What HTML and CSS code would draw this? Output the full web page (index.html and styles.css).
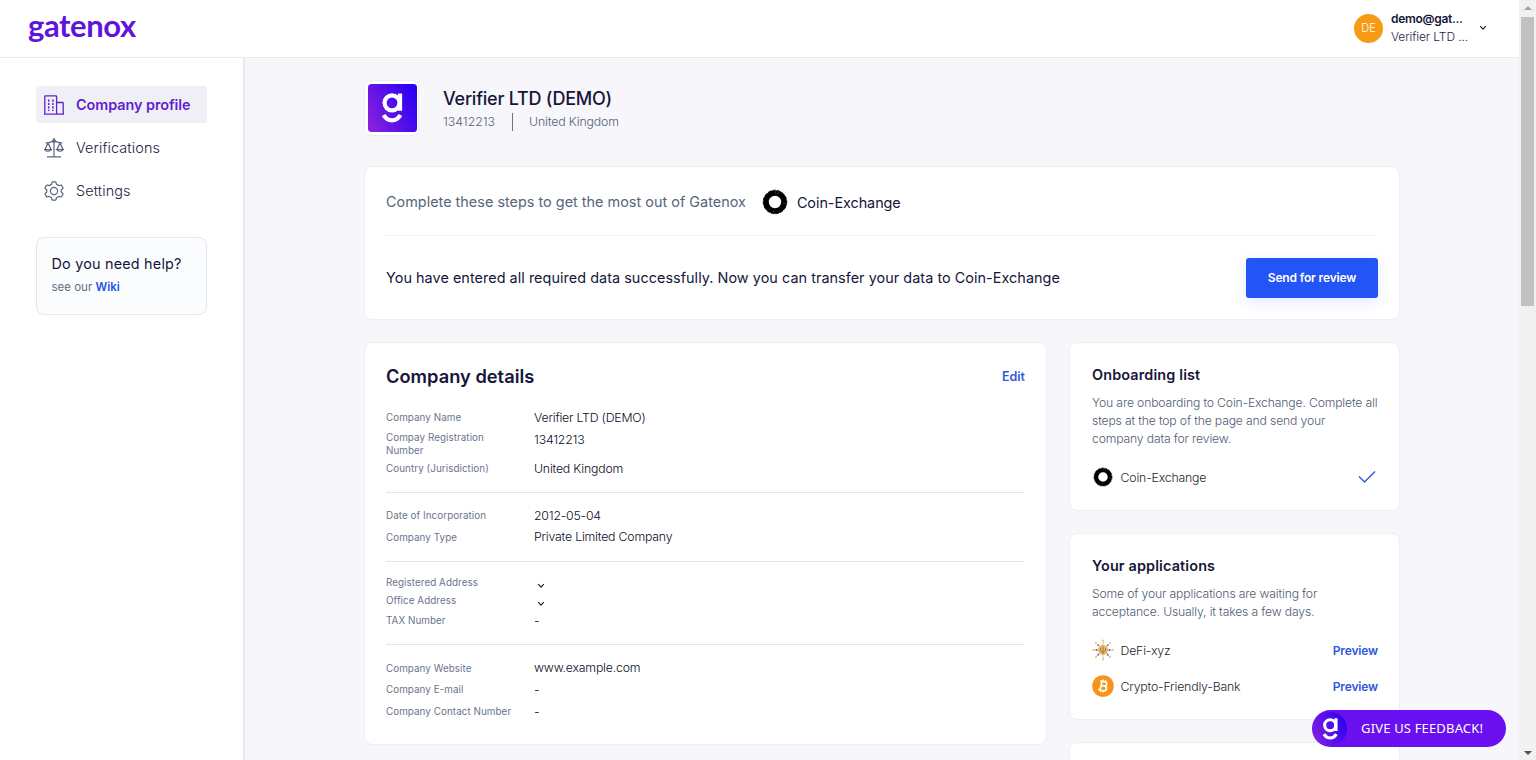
FILE: index.html
```html
<!DOCTYPE html>
<html lang="en">
<head>
<meta charset="utf-8">
<title>Gatenox</title>
<link rel="stylesheet" href="styles.css">
</head>
<body>
<svg class="defs" width="0" height="0">
  <defs>
    <linearGradient id="brand" x1="0" y1="0.75" x2="1" y2="0.25"><stop offset="0" stop-color="#8520dc"/><stop offset="1" stop-color="#2a00f5"/></linearGradient>
    <symbol id="mark" viewBox="0 0 22 32">
      <g fill="none" stroke="#fff" stroke-width="4.500"><circle cx="10.5" cy="10.5" r="8"/><path d="M19 .5V19M1.500 23.500C6 31 15 31 19.500 23.500"/></g>
    </symbol>
    <symbol id="coin" viewBox="0 0 26 26">
      <circle cx="13" cy="13" r="9" fill="none" stroke="#000" stroke-width="5.600"/>
      <circle cx="13" cy="13" r="11.800" fill="none" stroke="#000" stroke-width=".8" stroke-dasharray="3.500 1.300"/>
      <path d="M13 1l1 4M16 5l1-3M7 21l1.500-2M11 24l1-3M21 14l3 1" stroke="#777" stroke-width=".4"/>
    </symbol>
    <symbol id="chevron" viewBox="0 0 8 6"><path d="M1.200 1.200 4 4.200 6.800 1.200" fill="none" stroke="#1c1c3c" stroke-width="1.200"/></symbol>
  </defs>
</svg>
<div class="window">
  <div class="page">
    <header class="topbar">
      <div class="wordmark">gatenox</div>
      <div class="account">
        <div class="avatar">DE</div>
        <div class="who"><div class="mail">demo@gat...</div><div class="org">Verifier LTD ...</div></div>
        <svg class="chev" width="8" height="6"><use href="#chevron"/></svg>
      </div>
    </header>
    <div class="body">
      <nav class="sidebar">
        <a class="nav active"><svg width="20" height="20" viewBox="0 0 20 20" fill="none" stroke="currentColor" stroke-width="1.300"><path d="M.8 19V1.500Q.8.900 1.400.900H12Q12.600.900 12.600 1.500V19M12.600 7.500H18.600Q19.200 7.500 19.200 8.100V19M0 19.100H20"/><path d="M4.700 4.500V16M8.900 4.500V16" stroke-dasharray="2.200 1.200" stroke-width="1.500"/></svg><span>Company profile</span></a>
        <a class="nav"><svg width="20" height="20" viewBox="0 0 20 20" fill="none" stroke="currentColor" stroke-width="1.200"><path d="M10 0V18.800M3 18.900H17M1.500 5Q6 5 8 3.500Q10 2.200 12 3.500Q14 5 18.500 5M4 5 1 11.500H7ZM16 5 13 11.500H19ZM.7 11.500Q4 15 7.300 11.500ZM12.700 11.500Q16 15 19.300 11.500Z"/><circle cx="10" cy="3" r="1.300"/></svg><span>Verifications</span></a>
        <a class="nav"><svg width="20" height="20" viewBox="0 0 20 20" fill="none" stroke="currentColor" stroke-width="1.200" stroke-linejoin="round"><circle cx="10" cy="10" r="3.600"/><path d="M8.200.8H11.800L12.500 3.400Q13.800 3.800 14.700 4.700L17.300 4 19.100 7.100 17.200 9V11L19.100 12.900 17.300 16 14.700 15.300Q13.800 16.200 12.500 16.600L11.800 19.200H8.200L7.500 16.600Q6.200 16.200 5.300 15.300L2.700 16 .9 12.900 2.800 11V9L.9 7.100 2.700 4 5.300 4.700Q6.200 3.800 7.500 3.400Z"/></svg><span>Settings</span></a>
        <div class="help"><div class="help-title">Do you need help?</div><div class="help-sub">see our <b>Wiki</b></div></div>
      </nav>
      <main class="main">
        <section class="company">
          <div class="logo"><svg width="49" height="48" viewBox="0 0 49 48"><rect width="49" height="48" rx="3.500" fill="url(#brand)"/><use href="#mark" x="14" y="9" width="21" height="30"/></svg></div>
          <div><h1>Verifier LTD (DEMO)</h1><div class="meta"><span class="regno">13412213</span><span class="country">United Kingdom</span></div></div>
        </section>
        <section class="card steps">
          <div class="intro"><span class="intro-text">Complete these steps to get the most out of Gatenox</span><svg width="26" height="26"><use href="#coin"/></svg><span class="intro-name">Coin-Exchange</span></div>
          <div class="transfer"><span>You have entered all required data successfully. Now you can transfer your data to Coin-Exchange</span><button class="send">Send for review</button></div>
        </section>
        <div class="columns">
          <section class="card details">
            <div class="head"><h2>Company details</h2><a class="link edit">Edit</a></div>
            <dl class="group">
              <div class="row"><dt>Company Name</dt><dd>Verifier LTD (DEMO)</dd></div>
              <div class="row two"><dt>Compay Registration Number</dt><dd>13412213</dd></div>
              <div class="row"><dt>Country (Jurisdiction)</dt><dd>United Kingdom</dd></div>
            </dl>
            <dl class="group">
              <div class="row"><dt>Date of Incorporation</dt><dd>2012-05-04</dd></div>
              <div class="row"><dt>Company Type</dt><dd>Private Limited Company</dd></div>
            </dl>
            <dl class="group">
              <div class="row short"><dt>Registered Address</dt><dd><svg width="8" height="6"><use href="#chevron"/></svg></dd></div>
              <div class="row short"><dt>Office Address</dt><dd><svg width="8" height="6"><use href="#chevron"/></svg></dd></div>
              <div class="row"><dt>TAX Number</dt><dd>-</dd></div>
            </dl>
            <dl class="group">
              <div class="row"><dt>Company Website</dt><dd>www.example.com</dd></div>
              <div class="row"><dt>Company E-mail</dt><dd>-</dd></div>
              <div class="row"><dt>Company Contact Number</dt><dd>-</dd></div>
            </dl>
          </section>
          <div class="side">
            <section class="card panel onboarding">
              <h3>Onboarding list</h3>
              <p>You are onboarding to Coin-Exchange. Complete all<br>steps at the top of the page and send your<br>company data for review.</p>
              <div class="item"><svg class="icon" width="22" height="20"><use href="#coin"/></svg><span>Coin-Exchange</span><svg class="end check" width="18" height="14" viewBox="0 0 18 14"><path d="M1 6.500 6.500 12 17 1.500" fill="none" stroke="#2f5de0" stroke-width="1.500"/></svg></div>
            </section>
            <section class="card panel applications">
              <h3>Your applications</h3>
              <p>Some of your applications are waiting for<br>acceptance. Usually, it takes a few days.</p>
              <div class="item"><svg class="icon" width="22" height="22" viewBox="0 0 22 22"><g stroke="#aaa" stroke-width=".7"><path d="M11 2V20M2 11H20M4.500 4.500 17.500 17.500M17.500 4.500 4.500 17.500"/></g><g fill="#e9bf6a"><circle cx="11" cy="1.500" r="1"/><circle cx="11" cy="20.500" r="1"/><circle cx="1.300" cy="11" r="1"/><circle cx="20.700" cy="11" r="1"/><circle cx="4" cy="4" r="1"/><circle cx="18" cy="4" r="1"/><circle cx="4" cy="18" r="1"/><circle cx="18" cy="18" r="1"/></g><g fill="#666"><circle cx="4.500" cy="11" r=".9"/><circle cx="17.500" cy="11" r=".9"/><circle cx="6.300" cy="6.300" r=".9"/><circle cx="15.700" cy="6.300" r=".9"/><circle cx="6.300" cy="15.700" r=".9"/><circle cx="15.700" cy="15.700" r=".9"/></g><circle cx="11" cy="11" r="5" fill="#f0b762"/><path d="M11 7.500V15M8.500 9V11.500L11 13.500 13.500 11.500V9" fill="none" stroke="#8f6c48" stroke-width=".8"/></svg><span>DeFi-xyz</span><a class="link end">Preview</a></div>
              <div class="item"><svg class="icon" width="22" height="22" viewBox="0 0 22 22"><circle cx="11" cy="11" r="10.800" fill="#f7931a"/><g fill="none" stroke="#fff" stroke-width="1.700" transform="rotate(13 11 11)"><path d="M7 6.500H12Q14.300 6.500 14.300 8.600T12 10.800H9M9 10.800H12.500Q15 10.800 15 13.100T12.500 15.500H7M9 6.500V15.500"/><path d="M10 4.500V6.500M12.300 4.500V6.500M10 15.500V17.500M12.300 15.500V17.500" stroke-width="1.200"/></g></svg><span>Crypto-Friendly-Bank</span><a class="link end">Preview</a></div>
            </section>
            <section class="card panel next"></section>
          </div>
        </div>
      </main>
    </div>
    <button class="feedback"><svg width="34" height="34" viewBox="0 0 34 34"><circle cx="17" cy="17" r="17" fill="url(#brand)"/><use href="#mark" x="9" y="6" width="17" height="22"/></svg><span>GIVE US FEEDBACK!</span></button>
  </div>
  <div class="scrollbar"><i class="up"></i><div class="thumb"></div><i class="down"></i></div>
</div>
</body>
</html>
```
FILE: styles.css
```css
* { box-sizing: border-box; }
body { margin: 0; font-family: Inter, "Liberation Sans", sans-serif; color: #16163a; }
h1, h2, h3, p, dl, dd { margin: 0; }
svg { display: block; flex: none; }
.defs { position: absolute; }
button { border: 0; font-family: inherit; }
.window { display: flex; width: 1536px; height: 760px; overflow: hidden; }
.page { position: relative; width: 1519px; display: flex; flex-direction: column; background: #f6f6fb; }

.topbar { height: 58px; flex: none; display: flex; justify-content: space-between; padding: 0 32px 0 28px; background: #fff; border-bottom: 1px solid #e9e9ed; }
.wordmark { font: 700 31px/50px Lato, sans-serif; letter-spacing: -0.4px; color: #5f14dc; }
.account { display: flex; align-items: center; height: 56px; }
.avatar { width: 29px; height: 29px; border-radius: 50%; background: #f59c14; color: #fff; font-size: 11px; font-weight: 300; line-height: 29px; text-align: center; }
.who { width: 88px; margin: -1px 0 0 8px; font-size: 12px; line-height: 17.5px; white-space: nowrap; }
.mail { font-weight: 600; letter-spacing: -0.3px; }
.org { font-weight: 300; letter-spacing: -0.1px; color: #24243e; }

.body { display: flex; flex: 1; min-height: 0; }
.sidebar { width: 245px; flex: none; padding: 28px 36px; background: #fff; border-right: 2px solid #e9e9ed; }
.nav { display: flex; align-items: center; gap: 12px; height: 37px; width: 171px; margin-bottom: 6px; padding-left: 8px; border-radius: 4px; font-size: 14.4px; font-weight: 300; letter-spacing: 0.12px; color: #24243e; white-space: nowrap; }
.nav svg { color: #5a6580; }
.nav.active, .nav.active svg { color: #6320d0; }
.nav.active { background: #eff0f5; font-weight: 600; letter-spacing: -0.05px; }
.help { width: 171px; height: 78px; margin-top: 28px; padding: 15px 14.5px; border: 1px solid #e4e6ee; border-radius: 8px; background: #fbfcfe; white-space: nowrap; }
.help-title { font-size: 14.4px; line-height: 22px; letter-spacing: 0.2px; }
.help-sub { font-size: 11.5px; line-height: 24px; color: #636e82; }
.help-sub b { color: #2454e6; font-weight: 600; }

.main { width: 1036px; margin-left: 119px; padding-top: 22px; }
.company { display: flex; gap: 24px; height: 86px; }
.logo { width: 55px; height: 56px; padding: 3px; border: 1px solid #eee; border-radius: 7px; background: #fff; }
h1 { margin-top: 7px; font-size: 18px; line-height: 24px; font-weight: 500; letter-spacing: -0.23px; }
.meta { display: flex; margin-top: 2px; font-size: 12.3px; font-weight: 300; line-height: 18px; letter-spacing: -0.15px; color: #56627a; }
.regno { padding-right: 17px; border-right: 1px solid #6b7688; letter-spacing: 0; }
.country { padding-left: 16px; }

.card { background: #fff; border: 1px solid #eeeef3; border-radius: 8px; }
.steps { height: 154px; padding: 0 21px; }
.intro { display: flex; align-items: center; height: 69px; padding-top: 1px; border-bottom: 1px solid #f2f2f5; font-size: 14.4px; }
.intro-text { letter-spacing: 0.02px; color: #56657a; }
.intro svg { margin: 1px 9px 0 16px; }
.intro-name { margin-top: 1px; letter-spacing: -0.05px; }
.transfer { display: flex; justify-content: space-between; align-items: center; height: 83px; font-size: 14.4px; letter-spacing: 0.05px; }
.send { width: 132px; height: 40px; border-radius: 3px; background: #2354f5; color: #fff; font-size: 12px; font-weight: 600; letter-spacing: -0.15px; box-shadow: 0 4px 14px #2354f51f; }

.columns { display: flex; gap: 22px; margin-top: 22px; }
.details { width: 683px; height: 403px; padding: 0 21px; }
.head { display: flex; justify-content: space-between; align-items: center; height: 64px; padding-top: 2px; }
h2 { font-size: 18.3px; font-weight: 600; }
.link { font-size: 12px; font-weight: 600; color: #2f57dc; }
.edit { font-size: 12.5px; }
.group { padding: 12px 0 13px; border-bottom: 1px solid #e6e6ea; }
.head + .group { padding: 0 0 12px; }
.group:last-child { border: 0; }
.row { display: flex; align-items: center; height: 21.75px; white-space: nowrap; }
.row dt { width: 148px; font-size: 9.8px; line-height: 13px; letter-spacing: 0.08px; color: #69748a; }
.row dd { font-size: 12.3px; font-weight: 300; line-height: 21.75px; letter-spacing: -0.2px; color: #0c0c28; }
.two { height: 29px; align-items: flex-start; }
.two dt { padding: 2px 30px 0 0; white-space: normal; }
.short { height: 17.8px; }
.short dd { padding: 6px 0 0 3px; }

.side { width: 331px; display: flex; flex-direction: column; gap: 22px; }
.panel { padding: 22px 21px 0 22px; }
h3 { font-size: 14.4px; line-height: 20px; font-weight: 600; letter-spacing: 0.15px; }
.panel p { margin: 9px 0 11px; font-size: 12.2px; font-weight: 300; line-height: 18px; letter-spacing: -0.16px; color: #505c72; white-space: nowrap; }
.onboarding { height: 169px; }
.applications { height: 187px; }
.item { display: flex; align-items: center; height: 36px; font-size: 12.3px; font-weight: 300; letter-spacing: -0.18px; color: #1f1f30; }
.item .link { letter-spacing: -0.15px; }
.icon { margin-right: 6.5px; }
.end { margin-left: auto; }
.check { margin-right: 2px; }
.next { height: 60px; }

.feedback { position: absolute; left: 1312px; top: 710px; display: flex; align-items: center; width: 194px; height: 37px; padding: 0 1px; border-radius: 19px; background: #6a10f0; color: #fff; font: 13px "Noto Sans", sans-serif; letter-spacing: 0.17px; white-space: nowrap; }
.feedback span { margin: -2px 0 0 14px; }

.scrollbar { width: 17px; display: flex; flex-direction: column; align-items: center; background: #f1f1f1; }
.up, .down { border: 4px solid transparent; }
.up { margin-top: 2px; border-bottom-color: #a3a3a3; }
.thumb { width: 13px; height: 289px; margin-top: 7px; background: #c1c1c1; }
.down { margin-top: auto; margin-bottom: 1px; border-top-color: #505050; }
```
